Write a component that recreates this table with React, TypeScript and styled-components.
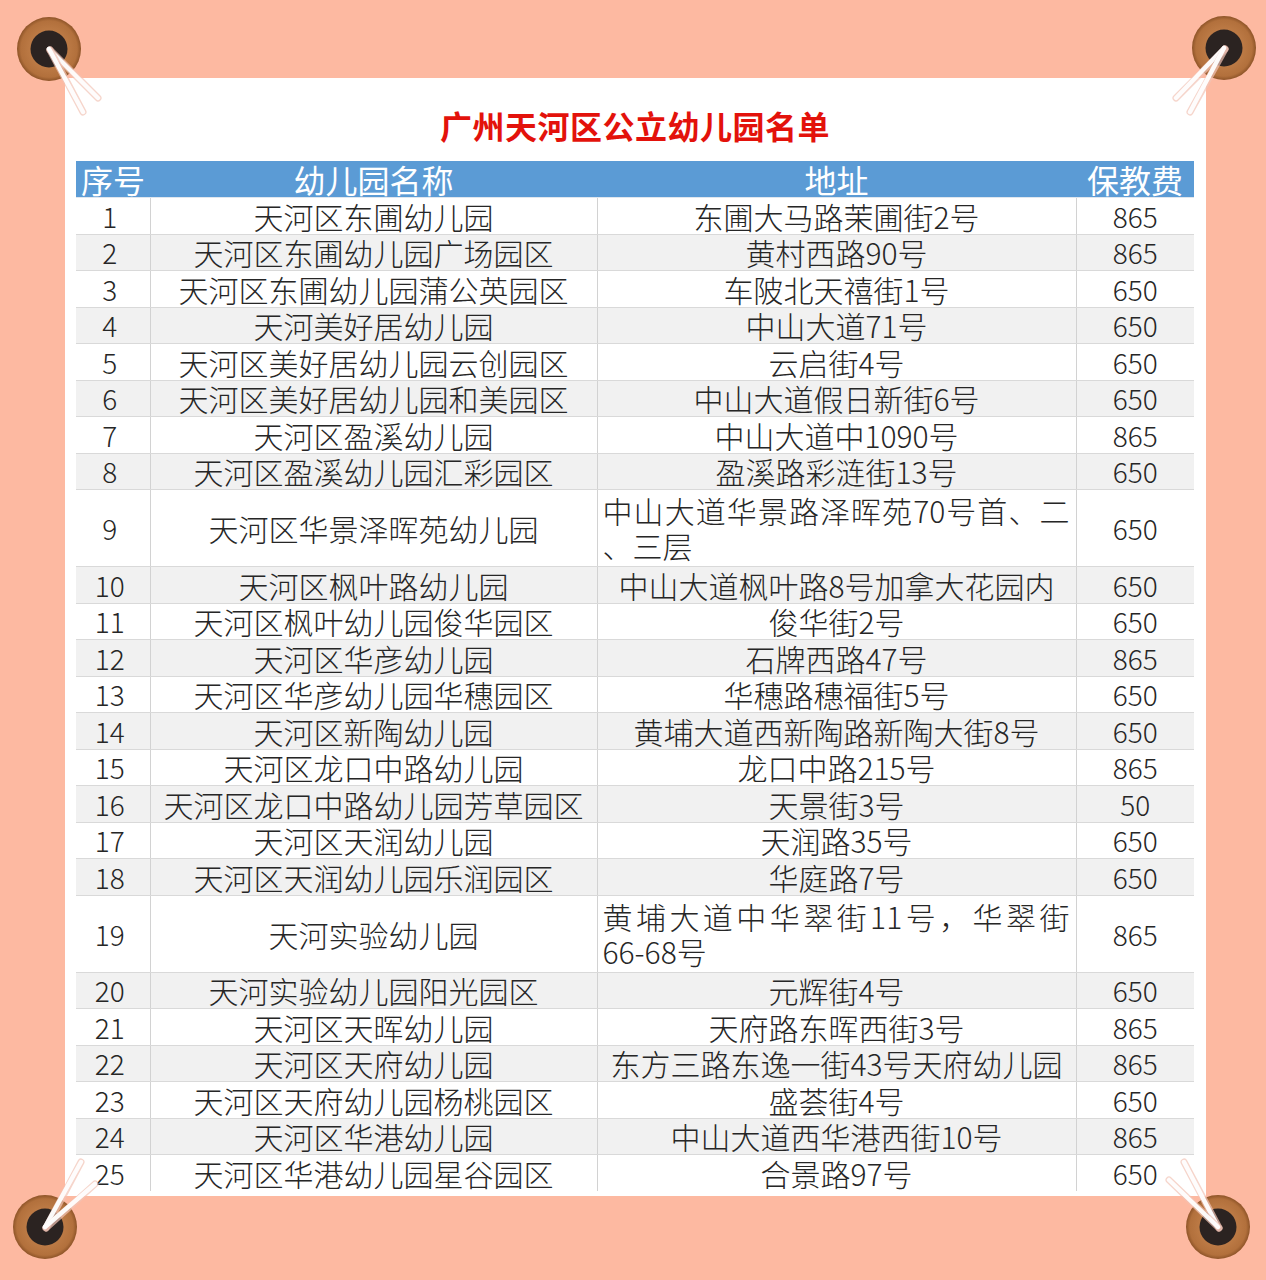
import React from 'react';
import styled, { createGlobalStyle } from 'styled-components';

type Row = [number, string, string[], number];

const ROWS: Row[] = [
  [1, '天河区东圃幼儿园', ['东圃大马路茉圃街2号'], 865],
  [2, '天河区东圃幼儿园广场园区', ['黄村西路90号'], 865],
  [3, '天河区东圃幼儿园蒲公英园区', ['车陂北天禧街1号'], 650],
  [4, '天河美好居幼儿园', ['中山大道71号'], 650],
  [5, '天河区美好居幼儿园云创园区', ['云启街4号'], 650],
  [6, '天河区美好居幼儿园和美园区', ['中山大道假日新街6号'], 650],
  [7, '天河区盈溪幼儿园', ['中山大道中1090号'], 865],
  [8, '天河区盈溪幼儿园汇彩园区', ['盈溪路彩涟街13号'], 650],
  [9, '天河区华景泽晖苑幼儿园', ['中山大道华景路泽晖苑70号首、二', '、三层'], 650],
  [10, '天河区枫叶路幼儿园', ['中山大道枫叶路8号加拿大花园内'], 650],
  [11, '天河区枫叶幼儿园俊华园区', ['俊华街2号'], 650],
  [12, '天河区华彦幼儿园', ['石牌西路47号'], 865],
  [13, '天河区华彦幼儿园华穗园区', ['华穗路穗福街5号'], 650],
  [14, '天河区新陶幼儿园', ['黄埔大道西新陶路新陶大街8号'], 650],
  [15, '天河区龙口中路幼儿园', ['龙口中路215号'], 865],
  [16, '天河区龙口中路幼儿园芳草园区', ['天景街3号'], 50],
  [17, '天河区天润幼儿园', ['天润路35号'], 650],
  [18, '天河区天润幼儿园乐润园区', ['华庭路7号'], 650],
  [19, '天河实验幼儿园', ['黄埔大道中华翠街11号，华翠街', '66-68号'], 865],
  [20, '天河实验幼儿园阳光园区', ['元辉街4号'], 650],
  [21, '天河区天晖幼儿园', ['天府路东晖西街3号'], 865],
  [22, '天河区天府幼儿园', ['东方三路东逸一街43号天府幼儿园'], 865],
  [23, '天河区天府幼儿园杨桃园区', ['盛荟街4号'], 650],
  [24, '天河区华港幼儿园', ['中山大道西华港西街10号'], 865],
  [25, '天河区华港幼儿园星谷园区', ['合景路97号'], 650],
];

// pin centre + where the two strings end
const PINS = [
  { cx: 49, cy: 49, ends: [[98, 98], [83, 112]] },
  { cx: 1224, cy: 48, ends: [[1176, 98], [1190, 112]] },
  { cx: 45, cy: 1227, ends: [[81, 1162], [95, 1184]] },
  { cx: 1218, cy: 1227, ends: [[1184, 1162], [1169, 1180]] },
];

const GlobalStyle = createGlobalStyle`
  html, body {
    margin: 0;
    padding: 0;
    background: #fdb9a1;
  }
`;

const Page = styled.div`
  position: relative;
  width: 1266px;
  height: 1280px;
  box-sizing: border-box;
  padding: 78px 0 0 65px;
  background: #fdb9a1;
  font-family: "Noto Sans CJK SC", "Liberation Sans", sans-serif;
`;

const Card = styled.div`
  width: 1141px;
  height: 1118px;
  box-sizing: border-box;
  padding: 28px 12px 0 11px;
  background: #fff;
`;

const Title = styled.h1`
  margin: 0 0 15px;
  height: 40px;
  line-height: 38px;
  text-align: center;
  font-size: 32px;
  font-weight: 700;
  letter-spacing: 0.5px;
  color: #e3120b;
`;

const Table = styled.table`
  width: 1118px;
  border-collapse: collapse;
  table-layout: fixed;
`;

const HeadCell = styled.th`
  height: 36px;
  padding: 0;
  background: #5b9bd5;
  color: #fff;
  font-size: 32px;
  font-weight: 400;
  line-height: 34px;
  white-space: nowrap;
  overflow: visible;
  border-bottom: 1px solid #dfe6ee;
`;

const BodyRow = styled.tr<{ $tall: boolean; $shade: boolean }>`
  height: ${(p) => (p.$tall ? '77px' : '36.5px')};
  background: ${(p) => (p.$shade ? '#f1f1f1' : '#fff')};
  &:last-child td {
    border-bottom: none;
  }
`;

const Cell = styled.td<{ $num?: boolean; $left?: boolean }>`
  padding: ${(p) => (p.$left ? '0 0 0 5px' : '0')};
  border-bottom: 1px solid #d9d9d9;
  border-left: 1px solid #d2d2d2;
  color: #262626;
  font-size: ${(p) => (p.$num ? '28px' : '30px')};
  font-weight: 300;
  line-height: 32px;
  text-align: ${(p) => (p.$left ? 'left' : 'center')};
  vertical-align: middle;
  white-space: nowrap;
  &:first-child {
    border-left: none;
    padding-right: 6px;
  }
`;

const Line = styled.div<{ $justify: boolean }>`
  line-height: 35px;
  text-align: left;
  text-align-last: ${(p) => (p.$justify ? 'justify' : 'left')};
  padding-right: ${(p) => (p.$justify ? '6px' : '0')};
`;

const Overlay = styled.svg`
  position: absolute;
  inset: 0;
  pointer-events: none;
`;

function Pins() {
  return (
    <Overlay width="1266" height="1280" viewBox="0 0 1266 1280">
      <defs>
        <radialGradient id="ring" cx="50%" cy="50%" r="50%">
          <stop offset="0.55" stopColor="#bd7b46" />
          <stop offset="0.88" stopColor="#b2703c" />
          <stop offset="1" stopColor="#8e5428" />
        </radialGradient>
      </defs>
      {PINS.map((p, i) => (
        <g key={i}>
          <circle cx={p.cx} cy={p.cy} r={32} fill="url(#ring)" />
          <circle cx={p.cx} cy={p.cy} r={18.5} fill="#2b2321" />
          {p.ends.map(([x, y], j) => (
            <g key={j}>
              <line x1={p.cx + 1} y1={p.cy + 1} x2={x} y2={y} stroke="#f3c4b6" strokeWidth={7} strokeLinecap="round" opacity={0.7} />
              <line x1={p.cx} y1={p.cy} x2={x} y2={y} stroke="#fff" strokeWidth={4.5} strokeLinecap="round" opacity={0.95} />
            </g>
          ))}
        </g>
      ))}
    </Overlay>
  );
}

export default function App() {
  return (
    <Page>
      <GlobalStyle />
      <Card>
        <Title>广州天河区公立幼儿园名单</Title>
        <Table>
          <colgroup>
            <col style={{ width: 74 }} />
            <col style={{ width: 447 }} />
            <col style={{ width: 479 }} />
            <col style={{ width: 118 }} />
          </colgroup>
          <thead>
            <tr>
              <HeadCell>序号</HeadCell>
              <HeadCell>幼儿园名称</HeadCell>
              <HeadCell>地址</HeadCell>
              <HeadCell>保教费</HeadCell>
            </tr>
          </thead>
          <tbody>
            {ROWS.map(([no, name, addr, fee]) => {
              const wrapped = addr.length > 1;
              return (
                <BodyRow key={no} $tall={wrapped} $shade={no % 2 === 0}>
                  <Cell $num>{no}</Cell>
                  <Cell>{name}</Cell>
                  {wrapped ? (
                    <Cell $left>
                      {addr.map((l, k) => (
                        <Line key={k} $justify={k === 0}>{l}</Line>
                      ))}
                    </Cell>
                  ) : (
                    <Cell>{addr[0]}</Cell>
                  )}
                  <Cell $num>{fee}</Cell>
                </BodyRow>
              );
            })}
          </tbody>
        </Table>
      </Card>
      <Pins />
    </Page>
  );
}
